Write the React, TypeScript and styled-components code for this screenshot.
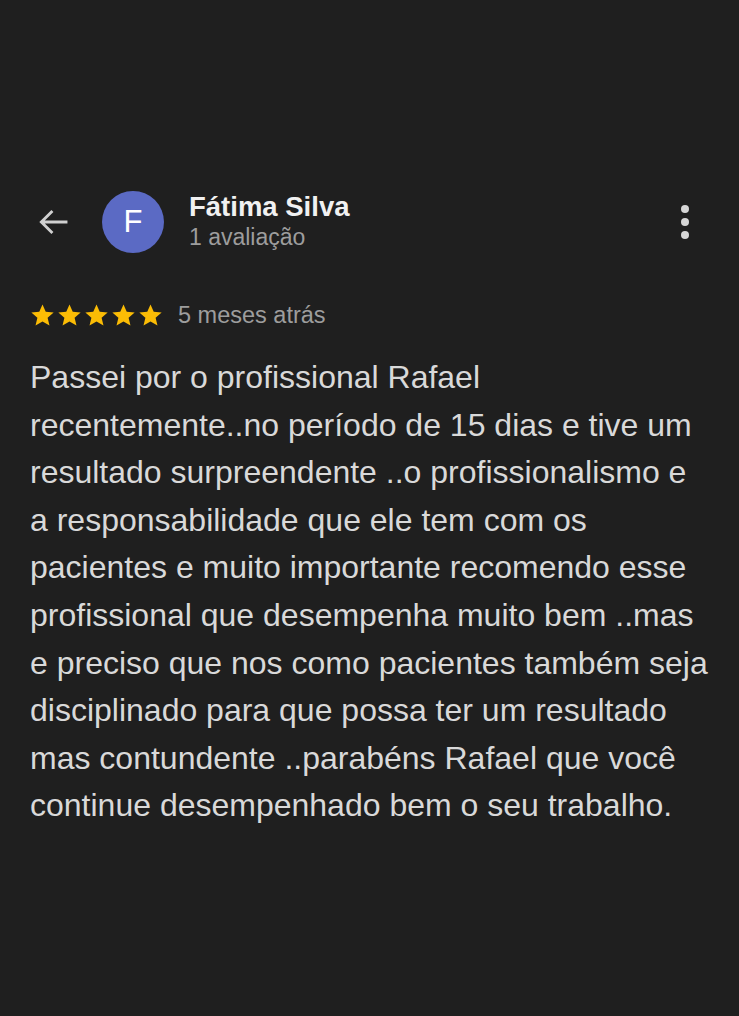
import styled, { createGlobalStyle } from "styled-components"

const GlobalStyle = createGlobalStyle`
  html, body {
    margin: 0;
    padding: 0;
    background: #1f1f1f;
  }
  body {
    font-family: "Liberation Sans", Arial, sans-serif;
  }
`

const Page = styled.div`
  width: 739px;
  height: 1016px;
  background: #1f1f1f;
  box-sizing: border-box;
  padding: 190px 30px 0 30px;
`

const Header = styled.div`
  display: flex;
  align-items: center;
  height: 64px;
`

const BackButton = styled.div`
  width: 44px;
  height: 40px;
  margin-left: 2px;
  display: flex;
  align-items: center;
  justify-content: center;
`

const Avatar = styled.div`
  width: 62px;
  height: 62px;
  border-radius: 50%;
  background: #5b6ac4;
  color: #fff;
  font-size: 31px;
  display: flex;
  align-items: center;
  justify-content: center;
  margin-left: 26px;
`

const NameBlock = styled.div`
  display: flex;
  flex-direction: column;
  margin-left: 25px;
  flex: 1;
`

const Name = styled.div`
  color: #f1f1f1;
  font-weight: bold;
  font-size: 27.5px;
  line-height: 30px;
`

const Sub = styled.div`
  color: #9d9d9d;
  font-size: 23px;
  line-height: 30px;
`

const MoreButton = styled.div`
  width: 30px;
  display: flex;
  flex-direction: column;
  align-items: center;
  gap: 5px;
  margin-right: 9px;
`

const Dot = styled.span`
  width: 8px;
  height: 8px;
  border-radius: 50%;
  background: #d6d6d6;
`

const RatingRow = styled.div`
  display: flex;
  align-items: center;
  margin-top: 46px;
  height: 30px;
`

const Stars = styled.div`
  display: flex;
  gap: 2px;
`

const When = styled.span`
  color: #9d9d9d;
  font-size: 23.5px;
  margin-left: 15px;
`

const Body = styled.div`
  margin-top: 24px;
  color: #d9d9d9;
  font-size: 32px;
  line-height: 47.6px;
`

const Line = styled.div`
  white-space: nowrap;
`

const Star = () => (
  <svg width="25" height="25" viewBox="0 0 24 24">
    <path
      d="M12 1.5l3.1 7 7.6.7-5.8 5 1.8 7.5L12 17.8l-6.7 3.9 1.8-7.5-5.8-5 7.6-.7z"
      fill="#fbbc05"
    />
  </svg>
)

const lines = [
  "Passei por o profissional Rafael",
  "recentemente..no período de 15 dias e tive um",
  "resultado surpreendente ..o profissionalismo e",
  "a responsabilidade que ele tem com os",
  "pacientes e muito importante recomendo esse",
  "profissional que desempenha muito bem ..mas",
  "e preciso que nos como pacientes também seja",
  "disciplinado para que possa ter um resultado",
  "mas contundente ..parabéns Rafael que você",
  "continue desempenhado bem o seu trabalho.",
]

export default function App() {
  return (
    <>
      <GlobalStyle />
      <Page>
        <Header>
          <BackButton>
            <svg width="38" height="38" viewBox="0 0 24 24" fill="none">
              <path
                d="M20.5 12H4M11 5l-7 7 7 7"
                stroke="#d0d0d0"
                strokeWidth="1.8"
              />
            </svg>
          </BackButton>
          <Avatar>F</Avatar>
          <NameBlock>
            <Name>Fátima Silva</Name>
            <Sub>1 avaliação</Sub>
          </NameBlock>
          <MoreButton>
            <Dot />
            <Dot />
            <Dot />
          </MoreButton>
        </Header>
        <RatingRow>
          <Stars>
            {[0, 1, 2, 3, 4].map((i) => (
              <Star key={i} />
            ))}
          </Stars>
          <When>5 meses atrás</When>
        </RatingRow>
        <Body>
          {lines.map((l) => (
            <Line key={l}>{l}</Line>
          ))}
        </Body>
      </Page>
    </>
  )
}
